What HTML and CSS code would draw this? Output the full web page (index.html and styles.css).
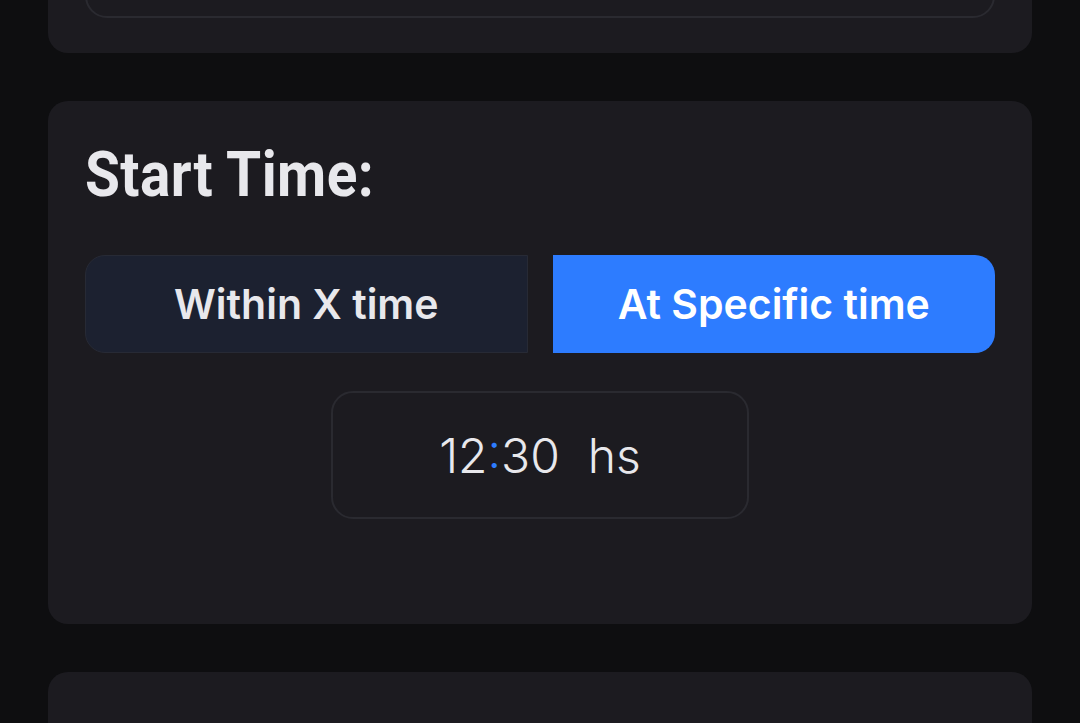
FILE: index.html
```html
<!DOCTYPE html>
<html lang="en">
<head>
<meta charset="utf-8">
<title>Start Time</title>
<link rel="stylesheet" href="styles.css">
</head>
<body>
<main class="page">
  <section class="card card-top">
    <div class="field"></div>
  </section>

  <section class="card">
    <h2 class="card-title">Start Time:</h2>
    <div class="segmented">
      <button class="seg seg-left" type="button">Within X time</button>
      <button class="seg seg-right active" type="button">At Specific time</button>
    </div>
    <div class="time-box">
      <span class="time">12<span class="colon">:</span>30</span><span class="unit">hs</span>
    </div>
  </section>

  <section class="card card-next">
    <h2 class="card-title">Repeat:</h2>
  </section>
</main>
</body>
</html>
```

FILE: styles.css
```css
* { box-sizing: border-box; }

html, body {
  margin: 0;
  padding: 0;
  background: #0e0e10;
  height: 100%;
  overflow: hidden;
}

body {
  font-family: Inter, "Noto Sans", sans-serif;
  color: #e8e8ec;
}

.page {
  display: flex;
  flex-direction: column;
  gap: 48px;
  padding: 0 48px;
  margin-top: -100px;
}

.card {
  background: #1c1b20;
  border-radius: 20px;
  padding: 36px 37px;
}

.card-top {
  padding-bottom: 35px;
}

.card-next {
  padding-top: 39px;
}

.field {
  height: 82px;
  border: 2px solid #2a2a30;
  border-radius: 22px;
}

.card-title {
  margin: 0;
  font-family: Roboto, "DejaVu Sans Condensed", sans-serif;
  font-weight: 700;
  font-size: 63px;
  line-height: 76px;
  letter-spacing: 0.5px;
  color: #e8e8ec;
  transform: scaleX(0.9);
  transform-origin: left center;
}

.segmented {
  display: grid;
  grid-template-columns: 1fr 1fr;
  gap: 25px;
  margin-top: 42px;
}

.seg {
  height: 98px;
  border: none;
  font-family: Inter, sans-serif;
  font-weight: 600;
  font-size: 41px;
  color: #e8e8ec;
  padding: 0;
}

.seg-left {
  background: #1c2130;
  border: 1px solid #272a35;
  border-radius: 20px 0 0 20px;
}

.seg-right {
  background: #2d7cff;
  color: #ffffff;
  border-radius: 0 20px 20px 0;
}

.time-box {
  width: 418px;
  height: 128px;
  margin: 38px auto 69px;
  border: 2px solid #2a2a30;
  border-radius: 22px;
  display: flex;
  align-items: center;
  justify-content: center;
  gap: 28px;
  font-family: Inter, sans-serif;
  font-weight: 300;
  font-size: 48px;
  color: #e8e8ec;
}

.colon {
  color: #2d7cff;
}
```
